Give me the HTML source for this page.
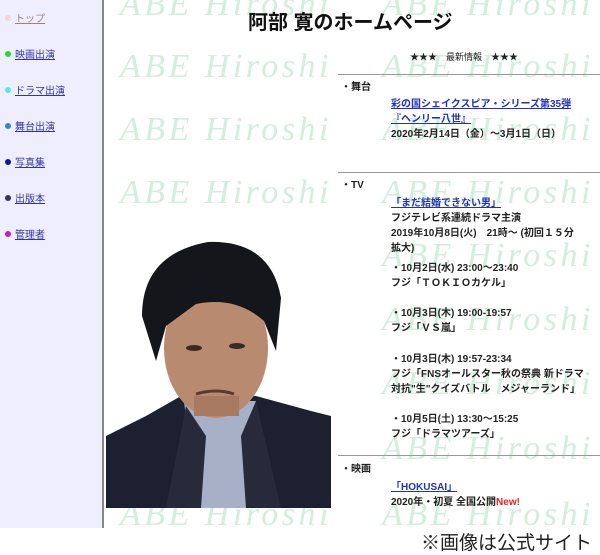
<!DOCTYPE html>
<html><head><meta charset="utf-8"><style>
body{margin:0;width:600px;height:552px;overflow:hidden;background:#fff;position:relative;font-family:"Liberation Sans","Noto Sans CJK JP",sans-serif;}
#side{position:absolute;left:0;top:0;width:102px;height:528px;background:#eeeeff;border-right:2px solid #888;}
.nav{position:absolute;left:5px;font-size:10px;color:#3333aa;text-decoration:underline;}
.nav i{display:inline-block;width:6px;height:6px;border-radius:50%;margin-right:4px;vertical-align:1px;}
.wm{position:absolute;font-family:"Liberation Serif",serif;font-style:italic;font-size:34px;color:#d2eedc;letter-spacing:3.5px;white-space:nowrap;}
.t{position:absolute;font-size:10px;font-weight:bold;color:#222;white-space:nowrap;line-height:15px;}
.l{color:#2233bb;text-decoration:underline;}
.hr{position:absolute;left:338px;width:262px;height:1px;background:#999;}
</style></head><body>
<div id="side"></div>
<div class="nav" style="top:10px;color:#a08080"><i style="background:#f4d6d6"></i>トップ</div>
<div class="nav" style="top:46px"><i style="background:#22dd22"></i>映画出演</div>
<div class="nav" style="top:82px"><i style="background:#55e8f0"></i>ドラマ出演</div>
<div class="nav" style="top:118px"><i style="background:#3388cc"></i>舞台出演</div>
<div class="nav" style="top:154px"><i style="background:#1111aa"></i>写真集</div>
<div class="nav" style="top:190px"><i style="background:#333366"></i>出版本</div>
<div class="nav" style="top:226px"><i style="background:#bb22bb"></i>管理者</div>

<div class="wm" style="left:120px;top:-14px">ABE Hiroshi</div><div class="wm" style="left:382px;top:-14px">ABE Hiroshi</div>
<div class="wm" style="left:120px;top:48px">ABE Hiroshi</div><div class="wm" style="left:382px;top:48px">ABE Hiroshi</div>
<div class="wm" style="left:120px;top:111px">ABE Hiroshi</div><div class="wm" style="left:382px;top:111px">ABE Hiroshi</div>
<div class="wm" style="left:120px;top:174px">ABE Hiroshi</div><div class="wm" style="left:382px;top:174px">ABE Hiroshi</div>
<div class="wm" style="left:120px;top:237px">ABE Hiroshi</div><div class="wm" style="left:382px;top:237px">ABE Hiroshi</div>
<div class="wm" style="left:120px;top:301px">ABE Hiroshi</div><div class="wm" style="left:382px;top:301px">ABE Hiroshi</div>
<div class="wm" style="left:120px;top:365px">ABE Hiroshi</div><div class="wm" style="left:382px;top:365px">ABE Hiroshi</div>
<div class="wm" style="left:120px;top:430px">ABE Hiroshi</div><div class="wm" style="left:382px;top:430px">ABE Hiroshi</div>
<div class="wm" style="left:120px;top:496px">ABE Hiroshi</div><div class="wm" style="left:382px;top:496px">ABE Hiroshi</div>

<svg style="position:absolute;left:106px;top:236px" width="225" height="272" viewBox="0 0 225 272">
<rect width="225" height="272" fill="#ffffff"/>
<path d="M0 200 L40 180 L75 160 L150 160 L205 175 L225 180 L225 272 L0 272Z" fill="#1c2030"/>
<path d="M78 165 L150 165 L140 272 L90 272Z" fill="#a8b0c8"/>
<path d="M80 170 L100 200 L95 272 L60 272Z" fill="#262a3a"/>
<path d="M150 165 L135 200 L140 272 L175 272Z" fill="#262a3a"/>
<ellipse cx="110" cy="112" rx="52" ry="70" fill="#b88a70"/>
<rect x="88" y="160" width="45" height="20" fill="#a87a62"/>
<path d="M36 80 Q36 18 102 6 Q165 4 175 62 L170 115 L158 85 Q130 60 90 68 L60 90 L50 125 Z" fill="#15161c"/>
<ellipse cx="88" cy="112" rx="8" ry="3" fill="#3a2a22"/><ellipse cx="131" cy="110" rx="8" ry="3" fill="#3a2a22"/>
<path d="M90 158 Q110 152 128 158" stroke="#5a3a30" stroke-width="3" fill="none"/>
</svg>

<div style="position:absolute;left:248px;top:6px;font-size:20px;font-weight:bold;color:#111;">阿部 寛のホームページ</div>
<div class="t" style="left:410px;top:50px;font-weight:normal;font-size:9px">★★★　最新情報　★★★</div>
<div class="hr" style="top:74px"></div>
<div class="t" style="left:341px;top:80px">・舞台</div>
<div class="t" style="left:391px;top:97px"><span class="l">彩の国シェイクスピア・シリーズ第35弾</span><br><span class="l">『ヘンリー八世』</span><br>2020年2月14日（金）～3月1日（日）</div>
<div class="hr" style="top:172px"></div>
<div class="t" style="left:341px;top:178px">・TV</div>
<div class="t" style="left:391px;top:196px"><span class="l">「まだ結婚できない男」</span><br>フジテレビ系連続ドラマ主演<br>2019年10月8日(火)　21時～ (初回１５分<br>拡大)</div>
<div class="t" style="left:391px;top:261px">・10月2日(水) 23:00～23:40<br>フジ「ＴＯＫＩＯカケル」</div>
<div class="t" style="left:391px;top:306px">・10月3日(木) 19:00-19:57<br>フジ「ＶＳ嵐」</div>
<div class="t" style="left:391px;top:352px">・10月3日(木) 19:57-23:34<br>フジ「FNSオールスター秋の祭典 新ドラマ<br>対抗"生"クイズバトル　メジャーランド」</div>
<div class="t" style="left:391px;top:412px">・10月5日(土) 13:30～15:25<br>フジ「ドラマツアーズ」</div>
<div class="hr" style="top:455px"></div>
<div class="t" style="left:341px;top:462px">・映画</div>
<div class="t" style="left:391px;top:480px"><span class="l">「HOKUSAI」</span><br>2020年・初夏 全国公開<span style="color:#ee2222">New!</span></div>
<div style="position:absolute;left:0;top:528px;width:600px;height:24px;background:#fff"></div>
<div style="position:absolute;right:8px;top:528px;font-size:19px;color:#222;white-space:nowrap">※画像は公式サイト</div>
</body></html>
